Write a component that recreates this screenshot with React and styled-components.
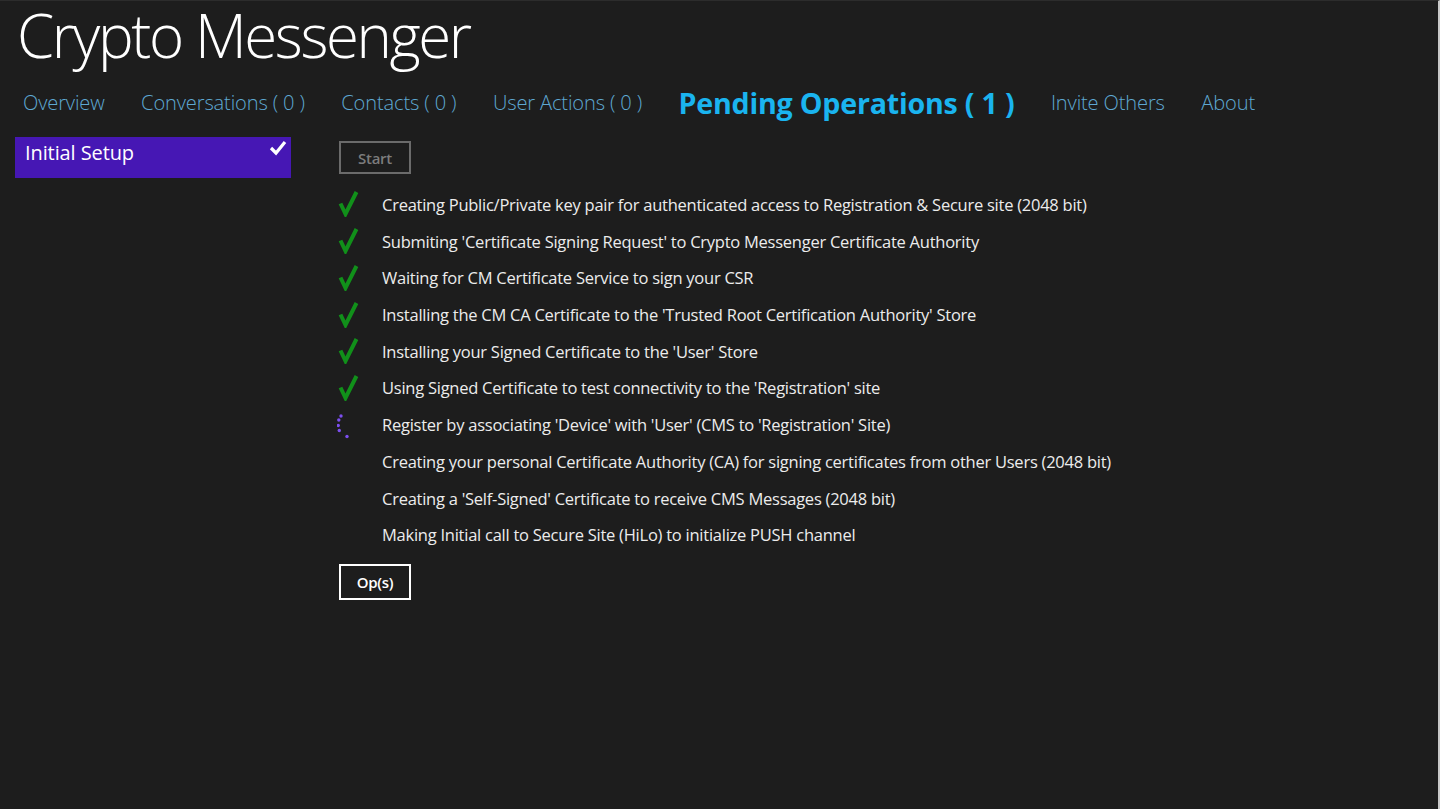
import React from "react";
import styled, { createGlobalStyle } from "styled-components";

const GlobalStyle = createGlobalStyle`
  html, body { margin: 0; padding: 0; background: #1d1d1d; }
  body { font-family: "Open Sans", "Noto Sans", "Liberation Sans", sans-serif; color: #fff; }
`;

const Page = styled.div`
  box-sizing: border-box;
  width: 1440px;
  height: 809px;
  background: #1d1d1d;
  border-top: 1px solid #2c2c2c;
  border-right: 2px solid #c8c8c8;
`;

const Title = styled.h1`
  margin: 0;
  padding: 0 0 0 17px;
  font-size: 60px;
  font-weight: 300;
  line-height: 68px;
  letter-spacing: -2.4px;
  color: #ffffff;
  white-space: nowrap;
`;

const Nav = styled.nav`
  display: flex;
  align-items: center;
  gap: 36.5px;
  padding-left: 23px;
  height: 68px;
  line-height: 40px;
`;

const NavItem = styled.span`
  font-size: ${(p) => (p.$active ? "28.6px" : "20.1px")};
  font-weight: ${(p) => (p.$active ? 700 : 300)};
  color: ${(p) => (p.$active ? "#1ab4ef" : "#5ea8d2")};
  letter-spacing: ${(p) => (p.$active ? "-0.2px" : "-0.15px")};
  white-space: nowrap;
`;

const Body = styled.div`
  display: flex;
`;

const Sidebar = styled.div`
  width: 276px;
  margin-left: 15px;
`;

const SideItem = styled.div`
  display: flex;
  align-items: flex-start;
  justify-content: space-between;
  height: 41px;
  box-sizing: border-box;
  padding: 3px 4px 0 10px;
  background: #4617b4;
  color: #fff;
  font-size: 20px;
  line-height: 26px;
  letter-spacing: -0.1px;
`;

const Content = styled.div`
  margin-left: 48px;
  display: flex;
  flex-direction: column;
  align-items: flex-start;
`;

const Button = styled.button`
  box-sizing: border-box;
  width: 72px;
  height: ${(p) => (p.$primary ? "36px" : "33px")};
  margin: ${(p) => (p.$primary ? "11px 0 0" : "4px 0 12px")};
  background: transparent;
  border: 2px solid ${(p) => (p.$primary ? "#ffffff" : "#6b6b6b")};
  color: ${(p) => (p.$primary ? "#ffffff" : "#7c7c7c")};
  font-family: inherit;
  font-size: 15px;
  font-weight: 600;
  letter-spacing: -0.3px;
  padding: 0;
`;

const List = styled.div`
  display: flex;
  flex-direction: column;
`;

const Row = styled.div`
  display: flex;
  align-items: center;
  height: 36.72px;
`;

const IconCell = styled.div`
  width: 43px;
  height: 36px;
  display: flex;
  align-items: center;
  margin-left: -2px;
`;

const RowText = styled.span`
  font-size: 16.5px;
  color: #ececec;
  letter-spacing: -0.25px;
  white-space: nowrap;
  margin-left: 2px;
`;

const Check = () => (
  <svg width="24" height="26" viewBox="0 0 24 26">
    <path d="M3.5 12.5 L8.5 23 L19.5 1" fill="none" stroke="#11901a" strokeWidth="4" strokeLinejoin="miter" />
  </svg>
);

const Spinner = () => (
  <svg width="24" height="36" viewBox="0 0 24 36">
    <g fill="#7d4ff0">
      <circle cx="4" cy="9" r="1.7" />
      <circle cx="1.8" cy="13" r="1.7" />
      <circle cx="1.2" cy="18.5" r="1.7" />
      <circle cx="2.3" cy="23.5" r="1.7" />
      <circle cx="10" cy="29.5" r="1.7" />
    </g>
  </svg>
);

const WhiteCheck = () => (
  <svg width="18" height="16" viewBox="0 0 18 16">
    <path d="M2 8 L7 13 L16 2" fill="none" stroke="#ffffff" strokeWidth="3.2" />
  </svg>
);

const navItems = [
  { label: "Overview" },
  { label: "Conversations ( 0 )" },
  { label: "Contacts ( 0 )" },
  { label: "User Actions ( 0 )" },
  { label: "Pending Operations ( 1 )", active: true },
  { label: "Invite Others" },
  { label: "About" },
];

const ops = [
  { text: "Creating Public/Private key pair for authenticated access to Registration & Secure site (2048 bit)", state: "done" },
  { text: "Submiting 'Certificate Signing Request' to Crypto Messenger Certificate Authority", state: "done" },
  { text: "Waiting for CM Certificate Service to sign your CSR", state: "done" },
  { text: "Installing the CM CA Certificate to the 'Trusted Root Certification Authority' Store", state: "done" },
  { text: "Installing your Signed Certificate to the 'User' Store", state: "done" },
  { text: "Using Signed Certificate to test connectivity to the 'Registration' site", state: "done" },
  { text: "Register by associating 'Device' with 'User' (CMS to 'Registration' Site)", state: "busy" },
  { text: "Creating your personal Certificate Authority (CA) for signing certificates from other Users (2048 bit)", state: "todo" },
  { text: "Creating a 'Self-Signed' Certificate to receive CMS Messages (2048 bit)", state: "todo" },
  { text: "Making Initial call to Secure Site (HiLo) to initialize PUSH channel", state: "todo" },
];

export default function App() {
  return (
    <>
      <GlobalStyle />
      <Page>
        <Title>Crypto Messenger</Title>
        <Nav>
          {navItems.map((n) => (
            <NavItem key={n.label} $active={n.active}>{n.label}</NavItem>
          ))}
        </Nav>
        <Body>
          <Sidebar>
            <SideItem>
              <span>Initial Setup</span>
              <WhiteCheck />
            </SideItem>
          </Sidebar>
          <Content>
            <Button>Start</Button>
            <List>
              {ops.map((o) => (
                <Row key={o.text}>
                  <IconCell>
                    {o.state === "done" && <Check />}
                    {o.state === "busy" && <Spinner />}
                  </IconCell>
                  <RowText>{o.text}</RowText>
                </Row>
              ))}
            </List>
            <Button $primary>Op(s)</Button>
          </Content>
        </Body>
      </Page>
    </>
  );
}
